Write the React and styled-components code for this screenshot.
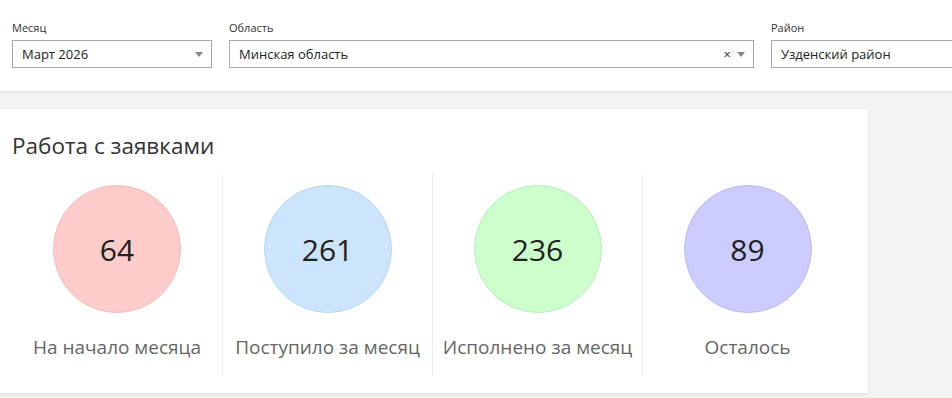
import React from "react";
import styled, { createGlobalStyle } from "styled-components";

const GlobalStyle = createGlobalStyle`
  body {
    margin: 0;
    background: #f3f3f3;
    font-family: "Open Sans", "Noto Sans", sans-serif;
    overflow: hidden;
  }
`;

const Page = styled.div`
  width: 952px;
  height: 398px;
  overflow: hidden;
`;

const FilterBar = styled.div`
  background: #fff;
  height: 91px;
  box-sizing: border-box;
  padding: 20px 12px 0;
  display: flex;
  gap: 17px;
  box-shadow: 0 1px 2px rgba(0, 0, 0, 0.08);
  white-space: nowrap;
`;

const Field = styled.div`
  flex: 0 0 ${(p) => p.width}px;
  display: flex;
  flex-direction: column;
`;

const Label = styled.div`
  font-size: 11px;
  line-height: 16px;
  color: #333;
  margin-bottom: 4px;
`;

const Select = styled.div`
  height: 28px;
  box-sizing: border-box;
  border: 1px solid #aaa;
  display: flex;
  align-items: center;
  padding: 0 8px 0 9px;
  font-size: 13px;
  color: #222;
`;

const Value = styled.span`
  flex: 1;
`;

const Clear = styled.span`
  font-size: 13px;
  color: #333;
  margin-right: 6px;
`;

const Arrow = styled.span`
  width: 0;
  height: 0;
  border-left: 4px solid transparent;
  border-right: 4px solid transparent;
  border-top: 5px solid #888;
`;

const Card = styled.section`
  margin-top: 18px;
  width: 868px;
  height: 284px;
  box-sizing: border-box;
  background: #fff;
  padding: 22px 16px 16px 12px;
  box-shadow: 0 1px 3px rgba(0, 0, 0, 0.1);
`;

const Title = styled.h2`
  margin: 0 0 12px;
  font-size: 22.5px;
  line-height: 30px;
  font-weight: 400;
  color: #333;
`;

const Stats = styled.div`
  display: grid;
  grid-template-columns: repeat(4, 210px);
`;

const Stat = styled.div`
  height: 203px;
  box-sizing: border-box;
  padding-top: 12px;
  display: flex;
  flex-direction: column;
  align-items: center;
  border-left: ${(p) => (p.first ? "none" : "1px solid #eee")};
`;

const Circle = styled.div`
  width: 128px;
  height: 128px;
  box-sizing: border-box;
  border-radius: 50%;
  background: ${(p) => p.bg};
  border: 1px solid ${(p) => p.edge};
  display: flex;
  align-items: center;
  justify-content: center;
  font-size: 30px;
  color: #222;
`;

const Caption = styled.div`
  margin-top: 22px;
  font-size: 19px;
  line-height: 24px;
  color: #666;
  white-space: nowrap;
`;

const stats = [
  { value: 64, label: "На начало месяца", bg: "#ffcccc", edge: "#f2bcbc" },
  { value: 261, label: "Поступило за месяц", bg: "#cce5fc", edge: "#b9d7f2" },
  { value: 236, label: "Исполнено за месяц", bg: "#ccffcc", edge: "#b9ecbc" },
  { value: 89, label: "Осталось", bg: "#ccccff", edge: "#babaf0" },
];

export default function App() {
  return (
    <Page>
      <GlobalStyle />
      <FilterBar>
        <Field width={200}>
          <Label>Месяц</Label>
          <Select>
            <Value>Март 2026</Value>
            <Arrow />
          </Select>
        </Field>
        <Field width={525}>
          <Label>Область</Label>
          <Select>
            <Value>Минская область</Value>
            <Clear>×</Clear>
            <Arrow />
          </Select>
        </Field>
        <Field width={200}>
          <Label>Район</Label>
          <Select>
            <Value>Узденский район</Value>
          </Select>
        </Field>
      </FilterBar>
      <Card>
        <Title>Работа с заявками</Title>
        <Stats>
          {stats.map((s, i) => (
            <Stat key={s.label} first={i === 0}>
              <Circle bg={s.bg} edge={s.edge}>{s.value}</Circle>
              <Caption>{s.label}</Caption>
            </Stat>
          ))}
        </Stats>
      </Card>
    </Page>
  );
}
